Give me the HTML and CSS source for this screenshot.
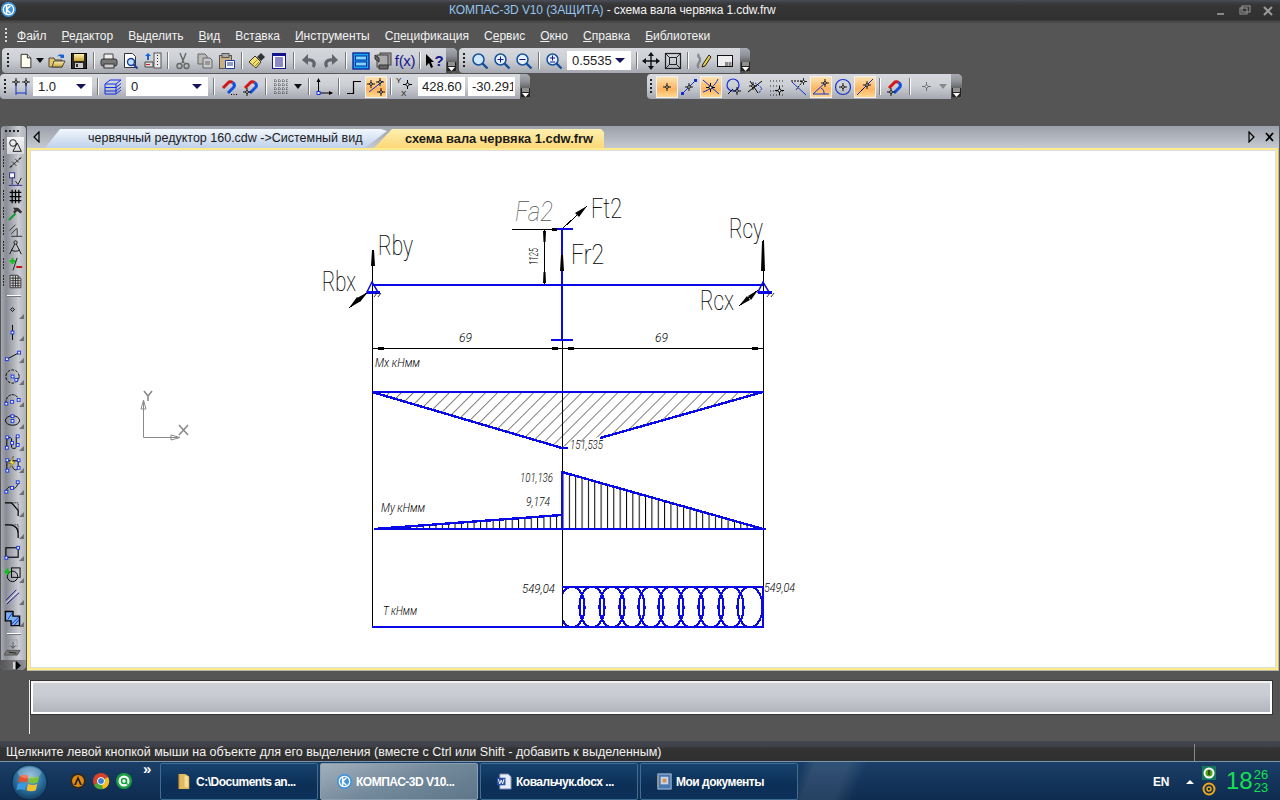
FILE: index.html
```html
<!DOCTYPE html>
<html lang="ru">
<head>
<meta charset="utf-8">
<title>КОМПАС-3D V10</title>
<link rel="stylesheet" href="styles.css">
</head>
<body>
<svg class="defs" width="0" height="0">
  <defs>
    <linearGradient id="gYellow" x1="0" y1="0" x2="0" y2="1"><stop offset="0" stop-color="#fff3b0"/><stop offset="1" stop-color="#c9a030"/></linearGradient>
    <radialGradient id="gOrb" cx=".5" cy=".35" r=".7"><stop offset="0" stop-color="#7fb6d8"/><stop offset=".55" stop-color="#2a6f9f"/><stop offset="1" stop-color="#0d2f52"/></radialGradient>
    <symbol id="mag" viewBox="0 0 18 18"><path d="M3 10L9 4A3.500 3.500 0 0 1 12.500 4.500" fill="none" stroke="#d01818" stroke-width="3"/><path d="M12.500 4.500A3.500 3.500 0 0 1 14 9L8 15" fill="none" stroke="#1450e0" stroke-width="3"/></symbol>
    <symbol id="cr" viewBox="0 0 9 9"><path d="M4.500 0v9M0 4.500h9" stroke="#000"/><circle cx="4.500" cy="4.500" r="1.500" fill="#fff" stroke="#000"/></symbol>
    <symbol id="corner" viewBox="0 0 5 5"><path d="M5 0v5H0z" fill="#6b6e74"/></symbol>
    <pattern id="hatchDiag" width="8.500" height="8.500" patternUnits="userSpaceOnUse" patternTransform="rotate(45)"><line x1="0" y1="0" x2="0" y2="8.500" stroke="#000" stroke-width="1"/></pattern>
    <pattern id="hatchVert" x="562.500" width="6.350" height="10" patternUnits="userSpaceOnUse"><line x1="0.500" y1="0" x2="0.500" y2="10" stroke="#000" stroke-width="1"/></pattern>
    <clipPath id="clipT"><rect x="563" y="587" width="200" height="40"/></clipPath>
  </defs>
</svg>

<header class="title">
  <svg class="logo" viewBox="0 0 18 18"><circle cx="9" cy="9" r="8" fill="#3f95dc"/><circle cx="9" cy="9" r="5.500" fill="none" stroke="#fff" stroke-width="1.400"/><path d="M7 4v10M7 9l4-4M7 9l4 4" stroke="#fff" stroke-width="1.600" fill="none"/></svg>
  <div class="title-text"><span class="t-blue">КОМПАС-3D V10 (ЗАЩИТА)</span> <span class="t-white">- схема вала червяка 1.cdw.frw</span></div>
  <div class="winbtns">
    <svg viewBox="0 0 16 12"><rect x="2" y="8" width="7" height="2" fill="#888"/></svg>
    <svg viewBox="0 0 16 12"><rect x="2" y="3" width="7" height="6" fill="none" stroke="#999"/><rect x="4" y="1" width="8" height="6" fill="none" stroke="#999"/></svg>
    <svg viewBox="0 0 16 12"><path d="M3 2l8 8M11 2l-8 8" stroke="#999" stroke-width="2.200"/></svg>
  </div>
</header>

<nav class="menu">
  <div class="grip"></div>
  <span><u>Ф</u>айл</span><span><u>Р</u>едактор</span><span>В<u>ы</u>делить</span><span><u>В</u>ид</span><span>Вст<u>а</u>вка</span><span><u>И</u>нструменты</span><span>С<u>п</u>ецификация</span><span>С<u>е</u>рвис</span><span><u>О</u>кно</span><span><u>С</u>правка</span><span><u>Б</u>иблиотеки</span>
</nav>

<div class="row row1">
  <div class="tb">
    <div class="grip g16"></div>
    <div class="ic w16"><svg viewBox="0 0 18 18"><path d="M3.500 1.500h7l4 4v11h-11z" fill="#fdfdf0" stroke="#222"/><path d="M10.500 1.500v4h4" fill="#ddd" stroke="#222"/></svg></div>
    <div class="ic w12"><i class="tri"></i></div>
    <div class="ic"><svg viewBox="0 0 18 18"><path d="M1 6h5l1 2h7v7H1z" fill="#e5c565" stroke="#444"/><path d="M4 15l2-6h11l-3 6z" fill="url(#gYellow)" stroke="#444"/><path d="M9 5a4 4 0 0 1 6-2l1-1v4h-4l1-1a3 3 0 0 0-4 0z" fill="#1860d8"/></svg></div>
    <div class="ic"><svg viewBox="0 0 18 18"><rect x="1.500" y="1.500" width="15" height="15" fill="#2a2a22" stroke="#000"/><rect x="4" y="2" width="10" height="7" fill="url(#gYellow)"/><rect x="5" y="11" width="8" height="5" fill="#ccc"/><rect x="6" y="12" width="2" height="3" fill="#333"/></svg></div>
    <div class="sep"></div>
    <div class="ic"><svg viewBox="0 0 18 18"><path d="M4 7V2h9v5" fill="#eee" stroke="#444"/><rect x="1" y="7" width="16" height="7" rx="2" fill="#777" stroke="#333"/><rect x="4" y="12" width="10" height="4" fill="#ccc" stroke="#333"/></svg></div>
    <div class="ic"><svg viewBox="0 0 18 18"><path d="M2.500 1.500h8l3 3v11h-11z" fill="#fff" stroke="#333"/><circle cx="9" cy="10" r="3.500" fill="#bfe0ff" stroke="#1a3c9c" stroke-width="1.400"/><path d="M11.500 12.500l4 4" stroke="#1a3c9c" stroke-width="2"/></svg></div>
    <div class="ic"><svg viewBox="0 0 18 18"><rect x="10" y="1" width="7" height="15" fill="#e8e8e8" stroke="#555"/><path d="M13.500 3v11" stroke="#222" stroke-dasharray="1 2"/><path d="M1 10h8v5H1z" fill="#ddd" stroke="#444"/><rect x="2" y="12" width="4" height="1" fill="#c22"/><path d="M3 8V4H1l3-3 3 3H5v4z" fill="#1860d8"/></svg></div>
    <div class="sep"></div>
    <div class="ic"><svg viewBox="0 0 18 18"><path d="M6 1l4 10M12 1L8 11" stroke="#666" stroke-width="1.400"/><circle cx="5.500" cy="14" r="2.500" fill="none" stroke="#666" stroke-width="1.400"/><circle cx="12.500" cy="14" r="2.500" fill="none" stroke="#666" stroke-width="1.400"/></svg></div>
    <div class="ic"><svg viewBox="0 0 18 18"><path d="M2 2h7l2 2v8H2z" fill="#b9b9b9" stroke="#666"/><path d="M7 6h7l2 2v8H7z" fill="#c9c9c9" stroke="#666"/><path d="M9 10h5M9 12h5" stroke="#666"/></svg></div>
    <div class="ic"><svg viewBox="0 0 18 18"><rect x="1.500" y="3.500" width="12" height="13" fill="#c8b080" stroke="#555"/><rect x="4" y="1.500" width="7" height="4" fill="#aaa" stroke="#555"/><path d="M7.500 8.500h9v8h-9z" fill="#fff" stroke="#1a3c9c"/><path d="M9 11h6M9 13h6" stroke="#1a3c9c"/></svg></div>
    <div class="sep"></div>
    <div class="ic"><svg viewBox="0 0 18 18"><path d="M1 10l6-6 6 6-5 6z" fill="#f3e070" stroke="#333"/><path d="M4 13l5-5M6 15l5-5" stroke="#9a8a30"/><path d="M9 5l4-4 4 4-4 4z" fill="#333"/></svg></div>
    <div class="ic"><svg viewBox="0 0 18 18"><rect x="2.500" y="1.500" width="13" height="15" fill="#fff" stroke="#14148c"/><rect x="3" y="2" width="12" height="2" fill="#14148c"/><path d="M5 6h8M5 8h8M5 10h8M5 12h8M5 14h8" stroke="#14148c"/></svg></div>
    <div class="sep"></div>
    <div class="ic"><svg viewBox="0 0 18 18"><path d="M13 15c3-4 0-8-6-7" fill="none" stroke="#62656b" stroke-width="3.200"/><path d="M8 2L2 8l6 5z" fill="#62656b"/></svg></div>
    <div class="ic"><svg viewBox="0 0 18 18"><path d="M5 15c-3-4 0-8 6-7" fill="none" stroke="#62656b" stroke-width="3.200"/><path d="M10 2l6 6-6 5z" fill="#62656b"/></svg></div>
    <div class="sep"></div>
    <div class="ic"><svg viewBox="0 0 18 18"><rect x="1" y="1" width="16" height="16" fill="#14a4ee" stroke="#082a9c" stroke-width="1.400"/><rect x="3.500" y="4" width="11" height="4" fill="#7cd6ff" stroke="#082a9c"/><rect x="3.500" y="10" width="11" height="4" fill="#7cd6ff" stroke="#082a9c"/></svg></div>
    <div class="ic"><svg viewBox="0 0 18 18"><rect x="6" y="1" width="11" height="12" fill="#999" stroke="#444"/><rect x="3" y="3" width="11" height="12" fill="#aaa" stroke="#444"/><path d="M1 3l4 3v4L1 7zM5 17h9v-4H5z" fill="#666" stroke="#333"/></svg></div>
    <div class="ic fx">f(x)</div>
    <div class="sep"></div>
    <div class="ic help"><svg viewBox="0 0 8 14"><path d="M0 0l8 8H5l2 5-2 1-2-5-3 3z" fill="#000"/></svg><b>?</b></div>
    <div class="end"><svg viewBox="0 0 9 9"><path d="M1 1h7M1 3h7" stroke="#fff"/><path d="M1 5h7L4.500 9z" fill="#fff"/></svg></div>
  </div>
  <div class="tb tb-zoom">
    <div class="grip g10"></div>
    <div class="ic"><svg viewBox="0 0 18 18"><circle cx="7.500" cy="7.500" r="5.500" fill="#cfe8ff" stroke="#14509c" stroke-width="1.500"/><path d="M11.500 11.500l5 5" stroke="#14509c" stroke-width="2.400"/></svg></div>
    <div class="ic"><svg viewBox="0 0 18 18"><circle cx="7.500" cy="7.500" r="5.500" fill="#e6f2ff" stroke="#14509c" stroke-width="1.500"/><path d="M11.500 11.500l5 5" stroke="#14509c" stroke-width="2.400"/><path d="M4.500 7.500h6M7.500 4.500v6" stroke="#14148c"/></svg></div>
    <div class="ic"><svg viewBox="0 0 18 18"><circle cx="7.500" cy="7.500" r="5.500" fill="#e6f2ff" stroke="#14509c" stroke-width="1.500"/><path d="M11.500 11.500l5 5" stroke="#14509c" stroke-width="2.400"/><path d="M4.500 7.500h6" stroke="#14148c"/></svg></div>
    <div class="sep"></div>
    <div class="ic"><svg viewBox="0 0 18 18"><circle cx="7.500" cy="7.500" r="5.500" fill="#e6f2ff" stroke="#14509c" stroke-width="1.500"/><path d="M11.500 11.500l5 5" stroke="#14509c" stroke-width="2.400"/><path d="M5 6h5M7.500 3.500v5M5 10h5" stroke="#14148c"/></svg></div>
    <div class="combo c64"><span>0.5535</span><i class="tri navy"></i></div>
    <div class="sep s7"></div>
    <div class="ic"><svg viewBox="0 0 18 18"><path d="M9 1v16M1 9h16" stroke="#111" stroke-width="1.400"/><path d="M9 0l3 4H6zM9 18l3-4H6zM0 9l4-3v6zM18 9l-4-3v6z" fill="#111"/></svg></div>
    <div class="ic"><svg viewBox="0 0 18 18"><rect x="1.500" y="1.500" width="15" height="15" fill="none" stroke="#222" stroke-width="1.200"/><rect x="5.500" y="5.500" width="7" height="7" fill="none" stroke="#222"/><path d="M2 2l3.500 3.500M16 2l-3.500 3.500M2 16l3.500-3.500M16 16l-3.500-3.500" stroke="#222"/></svg></div>
    <div class="sep"></div>
    <div class="ic"><svg viewBox="0 0 18 18"><path d="M5 16c-4-3 2-6 1-9s-3-2-1-5" fill="none" stroke="#888" stroke-width="2.400"/><path d="M9 12l6-9 2 2-6 9-3 1z" fill="#f0d040" stroke="#222"/></svg></div>
    <div class="ic"><svg viewBox="0 0 18 18"><rect x="1.500" y="3.500" width="15" height="11" fill="#eee" stroke="#111"/><rect x="9" y="10" width="3" height="4" fill="#888"/><rect x="12.500" y="10" width="3" height="4" fill="#888"/><path d="M1.500 14.500h15" stroke="#111"/></svg></div>
    <div class="end e-pad"><svg viewBox="0 0 9 9"><path d="M1 1h7M1 3h7" stroke="#fff"/><path d="M1 5h7L4.500 9z" fill="#fff"/></svg></div>
  </div>
</div>

<div class="row row2">
  <div class="tb tb-first">
    <div class="grip g10"></div>
    <div class="ic"><svg viewBox="0 0 18 18"><path d="M4 4v9M14 4v9M4 15h10" stroke="#1430d0"/><use href="#cr" x="0" y="0" width="8" height="8"/><use href="#cr" x="10" y="0" width="8" height="8"/><path d="M4 13v4M14 13v4" stroke="#1430d0"/></svg></div>
    <div class="combo c59"><span>1.0</span><i class="tri navy"></i></div>
    <div class="sep m2"></div>
    <div class="ic"><svg viewBox="0 0 18 18"><path d="M1 6h11l5-4H6zM1 9.500h11l5-4M1 13h11l5-4M1 16h11l5-4M1 6v10M12 6v10" fill="none" stroke="#1430e8"/></svg></div>
    <div class="combo c82"><span>0</span><i class="tri navy"></i></div>
    <div class="sep m2"></div>
    <div class="ic"><svg viewBox="0 0 18 18"><use href="#mag" width="18" height="18"/><path d="M11 16.500h1M13.500 16.500h1M16 16.500h1" stroke="#000"/></svg></div>
    <div class="ic"><svg viewBox="0 0 18 18"><use href="#mag" width="18" height="18"/><use href="#cr" x="1" y="10" width="8" height="8"/></svg></div>
    <div class="sep"></div>
    <div class="ic"><svg viewBox="0 0 18 18"><path d="M2 3h14M2 7h14M2 11h14M2 15h14M3 1v16M7 1v16M11 1v16M15 1v16" stroke="#555" stroke-dasharray="1 1"/></svg></div>
    <div class="ic w12"><i class="tri"></i></div>
    <div class="sep m1"></div>
    <div class="ic"><svg viewBox="0 0 18 18"><path d="M3.500 15V2M3.500 15H17" stroke="#000"/><path d="M3.500 0l2 4h-4zM18 15l-4-2v4z" fill="#000"/><rect x="2" y="13.500" width="3" height="3" fill="#fff" stroke="#1430e8"/></svg></div>
    <div class="sep"></div>
    <div class="ic"><svg viewBox="0 0 18 18"><path d="M2 15.500h6.500v-12H16" fill="none" stroke="#000" stroke-width="1.200"/></svg></div>
    <div class="ic on"><svg viewBox="0 0 18 18"><path d="M2 14L16 3" stroke="#1430d0"/><use href="#cr" x="9" y="0" width="8" height="8"/><use href="#cr" x="0" y="2" width="8" height="8"/><use href="#cr" x="10" y="10" width="8" height="8"/></svg></div>
    <div class="sep"></div>
    <div class="ic yx"><span>Y</span><svg viewBox="0 0 9 9"><use href="#cr" width="9" height="9"/></svg><span>X</span></div>
    <div class="inp"><span>428.60</span></div>
    <div class="inp"><span>-30.291</span></div>
    <div class="end e-pad5"><svg viewBox="0 0 9 9"><path d="M1 1h7M1 3h7" stroke="#fff"/><path d="M1 5h7L4.500 9z" fill="#fff"/></svg></div>
  </div>
  <div class="tb tb-snap">
    <div class="grip g9"></div>
    <div class="ic on"><svg viewBox="0 0 18 18"><use href="#cr" x="5" y="5" width="8" height="8"/></svg></div>
    <div class="ic"><svg viewBox="0 0 18 18"><path d="M2 16L16 2" stroke="#1430d0"/><rect x="1" y="14" width="3" height="3" fill="#1430d0"/><rect x="14" y="1" width="3" height="3" fill="#1430d0"/><use href="#cr" x="5" y="5" width="8" height="8"/></svg></div>
    <div class="ic on"><svg viewBox="0 0 18 18"><path d="M1 2L17 16M1 14C7 12 13 8 16 1" fill="none" stroke="#1430d0"/><use href="#cr" x="4" y="5" width="9" height="9"/></svg></div>
    <div class="ic"><svg viewBox="0 0 18 18"><circle cx="9" cy="7" r="6" fill="none" stroke="#1430d0" stroke-width="1.200"/><use href="#cr" x="9" y="9" width="8" height="8"/><path d="M4 16l5-5" stroke="#000"/></svg></div>
    <div class="ic"><svg viewBox="0 0 18 18"><path d="M4 3L12 15M2 14L16 3" stroke="#000"/><path d="M9 5l7 5-3 5" fill="none" stroke="#1430d0" stroke-dasharray="2 1"/><use href="#cr" x="3" y="4" width="8" height="8"/></svg></div>
    <div class="ic"><svg viewBox="0 0 18 18"><path d="M2 3h14M2 8h14M2 13h14M2 17h14" stroke="#222" stroke-dasharray="1 2"/><use href="#cr" x="7" y="8" width="9" height="9"/></svg></div>
    <div class="ic"><svg viewBox="0 0 18 18"><path d="M1 3h12" stroke="#000" stroke-dasharray="2 1"/><path d="M13 3L6 12" stroke="#000" stroke-dasharray="2 1"/><path d="M2 4l14 13" stroke="#1430d0"/><use href="#cr" x="10" y="0" width="7" height="7"/></svg></div>
    <div class="ic on"><svg viewBox="0 0 18 18"><path d="M1 16h16M1 16L14 4M9 10a6 6 0 0 1 3 6" fill="none" stroke="#1430d0"/><use href="#cr" x="9" y="1" width="8" height="8"/></svg></div>
    <div class="ic"><svg viewBox="0 0 18 18"><circle cx="9" cy="9" r="7.500" fill="none" stroke="#1430d0" stroke-width="1.200"/><use href="#cr" x="5" y="5" width="8" height="8"/></svg></div>
    <div class="ic on"><svg viewBox="0 0 18 18"><path d="M1 17L17 1" stroke="#1430d0"/><path d="M5 13l3-3" stroke="#000"/><use href="#cr" x="7" y="3" width="8" height="8"/></svg></div>
    <div class="sep"></div>
    <div class="ic"><svg viewBox="0 0 18 18"><use href="#mag" width="18" height="18"/><use href="#cr" x="1" y="10" width="8" height="8"/></svg></div>
    <div class="sep"></div>
    <div class="ic m1l dim"><svg viewBox="0 0 9 9"><use href="#cr" width="9" height="9"/></svg></div>
    <div class="ic w12"><i class="tri grey"></i></div>
    <div class="end e-pad2"><svg viewBox="0 0 9 9"><path d="M1 1h7M1 3h7" stroke="#fff"/><path d="M1 5h7L4.500 9z" fill="#fff"/></svg></div>
  </div>
</div>

<main class="work">
  <aside class="side">
    <div class="hgrip"></div>
    <div class="sgroup">
      <div class="si active"><svg viewBox="0 0 18 18"><circle cx="6" cy="6" r="4" fill="none" stroke="#000"/><path d="M11 6l5 10H6z" fill="none" stroke="#000"/></svg></div>
      <div class="si"><svg viewBox="0 0 18 18"><path d="M2 15L16 3M5 8l5 5M9 5l4 4" stroke="#222"/><path d="M2 15l3-1-1-1zM16 3l-3 1 1 1z" fill="#000"/></svg></div>
      <div class="si"><svg viewBox="0 0 18 18"><rect x="2" y="1" width="6" height="6" fill="#fff" stroke="#14148c"/><path d="M5 7v8M1 16h16" stroke="#14148c"/><path d="M9 11l3 4 4-8" fill="none" stroke="#000"/></svg></div>
      <div class="si"><svg viewBox="0 0 18 18"><path d="M2 4h14M2 9h14M2 14h14M5 1v16M9 1v16M13 1v16" stroke="#000" stroke-width="1.500"/></svg></div>
      <div class="si"><svg viewBox="0 0 18 18"><path d="M1 17L9 9" stroke="#0c9c30" stroke-width="2.400"/><path d="M6 2h6l5 5-2 2-4-3-3 3-2-2 2-2z" fill="#333"/></svg></div>
      <div class="si"><svg viewBox="0 0 18 18"><path d="M2 9l7-7M4 13l7-7M4 16h13M11 7v9" stroke="#222"/></svg></div>
      <div class="si"><svg viewBox="0 0 18 18"><circle cx="9" cy="3" r="2" fill="none" stroke="#000"/><path d="M8 5L2 17M10 5l6 12M4 12c3 2 7 2 10 0" fill="none" stroke="#000"/></svg></div>
      <div class="si"><svg viewBox="0 0 18 18"><path d="M2 5h7M5.500 1.500v7" stroke="#10c020" stroke-width="2.600"/><path d="M6 16l5-15" stroke="#000"/><path d="M10 12h7" stroke="#d01010" stroke-width="2.400"/></svg></div>
      <div class="si"><svg viewBox="0 0 18 18"><path d="M2.500 1.500h9l4 4v11h-13z" fill="#ddd" stroke="#222"/><path d="M3 5h12M3 8h12M3 11h12M3 14h12M6 2v14M9 2v14M12 2v14" stroke="#222"/></svg></div>
    </div>
    <div class="sdiv d10"></div>
    <div class="sgroup2">
      <div class="sj"><svg viewBox="0 0 18 18"><path d="M9 6l2 2-2 2-2-2z" fill="none" stroke="#000"/></svg><svg class="cn" viewBox="0 0 5 5"><use href="#corner"/></svg></div>
      <div class="sj"><svg viewBox="0 0 18 18"><path d="M9 1v16" stroke="#000"/><rect x="7.500" y="7.500" width="3" height="3" fill="#fff" stroke="#1430e8"/></svg><svg class="cn" viewBox="0 0 5 5"><use href="#corner"/></svg></div>
      <div class="sj"><svg viewBox="0 0 18 18"><path d="M3 14L16 7" stroke="#000"/><rect x="1.500" y="12.500" width="3" height="3" fill="#fff" stroke="#1430e8"/><rect x="14.500" y="5.500" width="3" height="3" fill="#fff" stroke="#1430e8"/></svg><svg class="cn" viewBox="0 0 5 5"><use href="#corner"/></svg></div>
      <div class="sj"><svg viewBox="0 0 18 18"><circle cx="9" cy="9" r="7" fill="none" stroke="#000" stroke-dasharray="3 1.500"/><rect x="7.500" y="7.500" width="3" height="3" fill="#fff" stroke="#1430e8"/><rect x="11.500" y="11" width="3" height="3" fill="#fff" stroke="#1430e8"/></svg><svg class="cn" viewBox="0 0 5 5"><use href="#corner"/></svg></div>
      <div class="sj"><svg viewBox="0 0 18 18"><path d="M2 14a7 8 0 0 1 14-2" fill="none" stroke="#000" stroke-dasharray="3 1"/><rect x="1" y="13" width="3" height="3" fill="#fff" stroke="#1430e8"/><rect x="7" y="11" width="3" height="3" fill="#fff" stroke="#1430e8"/><rect x="14" y="9" width="3" height="3" fill="#fff" stroke="#1430e8"/></svg><svg class="cn" viewBox="0 0 5 5"><use href="#corner"/></svg></div>
      <div class="sj"><svg viewBox="0 0 18 18"><ellipse cx="9" cy="9" rx="7.500" ry="5" fill="none" stroke="#000"/><rect x="7.500" y="3" width="3" height="3" fill="#fff" stroke="#1430e8"/><rect x="7.500" y="8" width="3" height="3" fill="#fff" stroke="#1430e8"/></svg><svg class="cn" viewBox="0 0 5 5"><use href="#corner"/></svg></div>
      <div class="sj"><svg viewBox="0 0 18 18"><path d="M3 15V5a3 3 0 0 1 5 0v9a3 3 0 0 0 5 0V3" fill="none" stroke="#000"/><rect x="2" y="2" width="3" height="3" fill="#fff" stroke="#1430e8"/><rect x="1.500" y="13" width="3" height="3" fill="#fff" stroke="#1430e8"/><rect x="7" y="8" width="3" height="3" fill="#fff" stroke="#1430e8"/><rect x="13" y="1" width="3" height="3" fill="#fff" stroke="#1430e8"/><rect x="13" y="10" width="3" height="3" fill="#fff" stroke="#1430e8"/></svg><svg class="cn" viewBox="0 0 5 5"><use href="#corner"/></svg></div>
      <div class="sj"><svg viewBox="0 0 18 18"><path d="M3 16V5h12v8c-2 3-5 2-6-2" fill="none" stroke="#000"/><path d="M10 0L5 8h3l-2 5 6-7H9z" fill="#f5e030" stroke="#333" stroke-width=".5"/><rect x="2" y="3" width="3" height="3" fill="#fff" stroke="#1430e8"/><rect x="2" y="14" width="3" height="3" fill="#fff" stroke="#1430e8"/><rect x="14" y="3" width="3" height="3" fill="#fff" stroke="#1430e8"/><rect x="14" y="11" width="3" height="3" fill="#fff" stroke="#1430e8"/></svg><svg class="cn" viewBox="0 0 5 5"><use href="#corner"/></svg></div>
      <div class="sj"><svg viewBox="0 0 18 18"><path d="M2 14c2-5 4-5 6-4s4 3 8-6" fill="none" stroke="#000"/><rect x="1" y="13" width="3" height="3" fill="#fff" stroke="#1430e8"/><rect x="7" y="9" width="3" height="3" fill="#fff" stroke="#1430e8"/><rect x="13" y="3" width="3" height="3" fill="#fff" stroke="#1430e8"/></svg><svg class="cn" viewBox="0 0 5 5"><use href="#corner"/></svg></div>
      <div class="sj"><svg viewBox="0 0 18 18"><path d="M1 3h7l7 8v6" fill="none" stroke="#000" stroke-width="1.300"/><path d="M8 3h7v8" fill="none" stroke="#000" stroke-dasharray="1 1"/></svg><svg class="cn" viewBox="0 0 5 5"><use href="#corner"/></svg></div>
      <div class="sj"><svg viewBox="0 0 18 18"><path d="M1 3h6c5 1 8 4 8 9v5" fill="none" stroke="#000" stroke-width="1.300"/><path d="M8 3h7v8" fill="none" stroke="#000" stroke-dasharray="1 1"/></svg><svg class="cn" viewBox="0 0 5 5"><use href="#corner"/></svg></div>
      <div class="sj"><svg viewBox="0 0 18 18"><rect x="2" y="4" width="13" height="10" fill="none" stroke="#000" stroke-width="1.200"/><rect x="1" y="13" width="3" height="3" fill="#fff" stroke="#1430e8"/><rect x="13.500" y="2.500" width="3" height="3" fill="#fff" stroke="#1430e8"/></svg><svg class="cn" viewBox="0 0 5 5"><use href="#corner"/></svg></div>
      <div class="sj"><svg viewBox="0 0 18 18"><rect x="8" y="2" width="9" height="10" fill="none" stroke="#000"/><circle cx="9" cy="11" r="5.500" fill="none" stroke="#000"/><path d="M1 6h6M4 3v0L1 6l3 3z" fill="#10c020" stroke="#10c020" stroke-width="1.400"/></svg><svg class="cn" viewBox="0 0 5 5"><use href="#corner"/></svg></div>
      <div class="sj"><svg viewBox="0 0 18 18"><path d="M2 13L13 2M3 17L16 5" stroke="#14148c"/><path d="M2 16L15 3" stroke="#fff" stroke-width=".6"/></svg><svg class="cn" viewBox="0 0 5 5"><use href="#corner"/></svg></div>
      <div class="sj"><svg viewBox="0 0 18 18"><path d="M1.500 1.500h8v5h7v10h-9v-5h-6z" fill="#7ab0f0" stroke="#000" stroke-width="1.500"/><path d="M4 10l5-7M8 15l8-8M11 16l5-6" stroke="#1430d0"/></svg><svg class="cn" viewBox="0 0 5 5"><use href="#corner"/></svg></div>
    </div>
    <div class="sdiv d6"></div>
    <div class="sj last"><svg viewBox="0 0 18 18"><path d="M5 1h9v7H5z" fill="none" stroke="#888" stroke-dasharray="1 1"/><path d="M9.500 3v6M7 7l2.500 3L12 7" fill="none" stroke="#555"/><path d="M3 12h14l-3 5H0z" fill="#777" stroke="#555"/><path d="M5 14l8 1" stroke="#222"/></svg></div>
    <div class="side-end"><svg viewBox="0 0 9 9"><path d="M1 1v7" stroke="#fff" stroke-width="1.400"/><path d="M3 0l5 4.500L3 9z" fill="#000"/></svg></div>
  </aside>
  <section class="doc">
    <div class="tabs">
      <div class="tabbtn"><svg viewBox="0 0 9 12"><path d="M7 1L2 6l5 5z" fill="none" stroke="#000" stroke-width="1.200"/></svg></div>
      <div class="tab tab-a">червячный редуктор 160.cdw -&gt;Системный вид</div>
      <div class="tab tab-b">схема вала червяка 1.cdw.frw</div>
      <div class="tabctl">
        <svg viewBox="0 0 9 12"><path d="M2 1l5 5-5 5z" fill="none" stroke="#000" stroke-width="1.200"/></svg>
        <svg viewBox="0 0 9 12"><path d="M1 2l7 8M8 2l-7 8" stroke="#000" stroke-width="1.800"/></svg>
      </div>
    </div>
    <div class="canvas">
      <svg class="drawing" viewBox="30 150 1246 518" width="1246" height="518">
        <g class="axes">
          <path d="M143.500 402V437.500H178"/>
          <path d="M143.500 400l-2.500 9h5zM180 437.500l-9-2.500v5z"/>
          <path class="thick" d="M144 391l4 5 4-5M148 396v5M179 425l9 10M188 425l-9 10"/>
        </g>

        <!-- witness and dimension lines -->
        <g class="bk">
          <path d="M372.500 250V627M562.500 340V627M763.500 240V627"/>
          <path d="M372 348.500H764"/>
          <path d="M512 229.500H556M544.500 229V285M542 285.500H553"/>
          <path d="M563 228L587 206M349 308L368 292M739 306L758 290"/>
        </g>

        <!-- shaft -->
        <g class="bl">
          <path d="M372 285H763M562 229V340M555 229H573M551 340H573"/>
          <path class="t1" d="M372 282l-5 10h11zM763 282l-5 10h11z"/>
          <path d="M367 292.500h13M758 292.500h14"/>
        </g>
        <path class="bkth" d="M374 297l3-4M378 297l3-4M767 297l3-4M771 297l3-4"/>

        <g class="hd">
          <path d="M378 347h6v3h-6zM552 347h6v3h-6zM568 347h6v3h-6zM752 347h6v3h-6zM552 228h5v3h-5z"/>
          <path d="M543 231h3l-.5 11h-2zM543 283h3l-.5-11h-2zM371 266h4l-1-16h-2zM761 271h4l-1-30h-2zM560 271h4l-1-16h-2z"/>
          <path d="M587 206l-12 7 4 4zM349 308l12-7-4-4zM368 292l-11 6 3 4zM739 306l11-6-3-4zM758 290l-10 6 3 4z"/>
        </g>

        <!-- Mx -->
        <polygon class="fd" points="373,393 562,447 610,434 763,393"/>
        <path class="blp" d="M372 392H764M372 392L562 448H568M600 438L763 392"/>

        <!-- My -->
        <polygon class="fv" points="374,529 562,515 562,472 763,529"/>
        <path class="blp" d="M374 529H766M374 529L562 515M562 529V472L763 529"/>

        <!-- T -->
        <g class="clipT">
          <g class="circ">
            <ellipse cx="572" cy="607" rx="12.500" ry="20.500"/><ellipse cx="592" cy="607" rx="12.500" ry="20.500"/><ellipse cx="612" cy="607" rx="12.500" ry="20.500"/><ellipse cx="632" cy="607" rx="12.500" ry="20.500"/><ellipse cx="651" cy="607" rx="12.500" ry="20.500"/><ellipse cx="671" cy="607" rx="12.500" ry="20.500"/><ellipse cx="691" cy="607" rx="12.500" ry="20.500"/><ellipse cx="711" cy="607" rx="12.500" ry="20.500"/><ellipse cx="731" cy="607" rx="12.500" ry="20.500"/><ellipse cx="750" cy="607" rx="12.500" ry="20.500"/>
          </g>
        </g>
        <path class="blp" d="M562 587H764M372 627H764M763 587V627"/>

        <!-- labels -->
        <text class="big" x="378" y="255" textLength="35" lengthAdjust="spacingAndGlyphs">Rby</text>
        <text class="big" x="322" y="291" textLength="34" lengthAdjust="spacingAndGlyphs">Rbx</text>
        <text class="big" x="729" y="238" textLength="34" lengthAdjust="spacingAndGlyphs">Rcy</text>
        <text class="big" x="700" y="310" textLength="34" lengthAdjust="spacingAndGlyphs">Rcx</text>
        <text class="big" x="591" y="218" textLength="31" lengthAdjust="spacingAndGlyphs">Ft2</text>
        <text class="big" x="571" y="264" textLength="33" lengthAdjust="spacingAndGlyphs">Fr2</text>
        <text class="big ital grey" x="515" y="221" textLength="38" lengthAdjust="spacingAndGlyphs">Fa2</text>
        <text class="sm" x="459" y="342" textLength="13" lengthAdjust="spacingAndGlyphs">69</text>
        <text class="sm" x="655" y="342" textLength="13" lengthAdjust="spacingAndGlyphs">69</text>
        <text class="sm rot" x="0" y="0" transform="translate(538 265) rotate(-90)" textLength="17" lengthAdjust="spacingAndGlyphs">1125</text>
        <text class="sm" x="375" y="367" textLength="45" lengthAdjust="spacingAndGlyphs">Mx кНмм</text>
        <text class="sm" x="570" y="449" textLength="33" lengthAdjust="spacingAndGlyphs">151,535</text>
        <text class="sm" x="520" y="482" textLength="33" lengthAdjust="spacingAndGlyphs">101,136</text>
        <text class="sm" x="526" y="506" textLength="24" lengthAdjust="spacingAndGlyphs">9,174</text>
        <text class="sm" x="381" y="512" textLength="44" lengthAdjust="spacingAndGlyphs">My кНмм</text>
        <text class="sm" x="522" y="593" textLength="33" lengthAdjust="spacingAndGlyphs">549,04</text>
        <text class="sm" x="764" y="592" textLength="31" lengthAdjust="spacingAndGlyphs">549,04</text>
        <text class="sm" x="383" y="615" textLength="34" lengthAdjust="spacingAndGlyphs">T кНмм</text>
      </svg>
    </div>
  </section>
</main>

<section class="panel-wrap">
  <div class="panel"></div>
</section>

<div class="status">
  <span>Щелкните левой кнопкой мыши на объекте для его выделения (вместе с Ctrl или Shift - добавить к выделенным)</span>
  <i class="status-sep"></i>
</div>

<footer class="taskbar">
  <svg class="orb" viewBox="0 0 38 38">
    <circle cx="19" cy="19" r="18" fill="url(#gOrb)" stroke="#0a2540"/>
    <path d="M9 12q4-2 9 0l-1.500 7q-5-2-9 0z" fill="#e8502a"/>
    <path d="M19.500 12.500q5 2 9.500 0L27.500 19q-5 2-9.500 0z" fill="#7cc23a"/>
    <path d="M7 20.500q4-2 9 0L14.500 27q-4.500-2-9 0z" fill="#3a9ae0"/>
    <path d="M17.500 20.500q5 2 9.500 0L25.500 27q-5 2-9.500 0z" fill="#f5c030"/>
    <ellipse cx="19" cy="9" rx="12" ry="6" fill="#fff" opacity=".25"/>
  </svg>
  <div class="quick">
    <svg viewBox="0 0 18 18"><circle cx="9" cy="9" r="8" fill="#2a2a2a"/><circle cx="9" cy="9" r="6" fill="#e08a10"/><path d="M9 4l4 9h-2l-2-5-2 5H5z" fill="#222"/></svg>
    <svg viewBox="0 0 18 18"><circle cx="9" cy="9" r="8" fill="#d8402a"/><path d="M9 9L2 13a8 8 0 0 0 9 4z" fill="#4ca838"/><path d="M9 9l2 8a8 8 0 0 0 5-12z" fill="#f0c020"/><circle cx="9" cy="9" r="3.500" fill="#3a80d8" stroke="#fff"/></svg>
    <svg viewBox="0 0 18 18"><circle cx="9" cy="9" r="8" fill="#18a040"/><circle cx="9" cy="9" r="5.500" fill="#fff"/><circle cx="9" cy="9" r="2.500" fill="none" stroke="#18a040" stroke-width="1.500"/><path d="M11.500 7v4q0 1.500 1.500 1" fill="none" stroke="#18a040" stroke-width="1.300"/></svg>
  </div>
  <span class="more">»</span>
  <div class="tbtn"><svg viewBox="0 0 18 18"><path d="M3 1h7l4 3v13H3z" fill="#e0b860"/><path d="M9 3h4v12H9z" fill="#f5dc90"/><path d="M3 1v16" stroke="#a88030"/></svg><span>C:\Documents an...</span></div>
  <div class="tbtn act"><svg viewBox="0 0 18 18"><circle cx="9" cy="9" r="8" fill="#3f95dc"/><circle cx="9" cy="9" r="5.500" fill="none" stroke="#fff" stroke-width="1.400"/><path d="M7 4v10M7 9l4-4M7 9l4 4" stroke="#fff" stroke-width="1.600" fill="none"/></svg><span>КОМПАС-3D V10...</span></div>
  <div class="tbtn"><svg viewBox="0 0 18 18"><path d="M4 1h9l3 3v13H4z" fill="#e8eef8" stroke="#6a7ea8"/><rect x="1" y="5" width="9" height="8" fill="#2a50a8"/><path d="M2.500 6.500l1.500 5 1.500-4 1.500 4 1.500-5" fill="none" stroke="#fff"/></svg><span>Ковальчук.docx ...</span></div>
  <div class="tbtn"><svg viewBox="0 0 18 18"><rect x="2" y="1" width="14" height="16" fill="#4a78b0" stroke="#b0c8e0"/><rect x="5" y="4" width="8" height="8" fill="#c8d8e8"/><rect x="7" y="6" width="4" height="4" fill="#d89050"/><path d="M2 3v12" stroke="#e0a040" stroke-width="1.400" stroke-dasharray="1 1"/></svg><span>Мои документы</span></div>
  <div class="tray">
    <span class="lang">EN</span>
    <i class="tray-up"></i>
    <div class="tray-ic">
      <svg viewBox="0 0 14 14"><rect width="14" height="14" fill="#14785a"/><circle cx="7" cy="7" r="5.500" fill="#fff"/><circle cx="7" cy="7" r="3.500" fill="#50a010"/><rect x="6.400" y="4" width="1.200" height="5" fill="#123"/></svg>
      <svg viewBox="0 0 14 14"><circle cx="7" cy="7" r="5.500" fill="none" stroke="#f0a818" stroke-width="2"/><circle cx="7" cy="7" r="2" fill="none" stroke="#f0a818" stroke-width="1.500"/></svg>
    </div>
    <div class="clock"><b>18</b><div class="clock-s"><span>26</span><span>23</span></div></div>
  </div>
</footer>
</body>
</html>
```
FILE: styles.css
```css
* { box-sizing: border-box; }
html, body { margin: 0; padding: 0; }
body {
  width: 1280px; height: 800px; overflow: hidden;
  background: #555; color: #111;
  font: 12px "Liberation Sans", "DejaVu Sans", sans-serif;
  display: flex; flex-direction: column;
}
.defs { position: absolute; }

/* title */
.title {
  height: 23px; flex: none; position: relative;
  display: flex; align-items: center; justify-content: center;
  background: linear-gradient(#4b4e58 0, #3a3b3f 3px, #353535 6px, #303030 20px, #474747 21px, #4a4a4a 23px);
}
.logo { position: absolute; left: 0; top: 1px; width: 17px; height: 17px; }
.title-text { position: absolute; left: 449px; top: 2px; font: 12px/16px "Liberation Sans", sans-serif; white-space: nowrap; letter-spacing: -.1px; }
.t-blue { color: #96c4ee; }
.t-white { color: #f2f2f2; }
.winbtns { position: absolute; right: 0; top: 5px; display: flex; gap: 7px; padding-right: 3px; }
.winbtns svg { width: 16px; height: 12px; }

/* menu */
.menu { height: 25px; flex: none; display: flex; align-items: center; color: #f2f2f2; padding-left: 5px; }
.menu span { margin-left: 15px; font-size: 12px; line-height: 16px; white-space: nowrap; }
.menu .grip { width: 2px; }
.menu .grip + span { margin-left: 10px; }

.grip {
  height: 15px; position: relative; flex: none;
  background: linear-gradient(90deg, transparent calc(50% - 1px), #222 calc(50% - 1px), #222 calc(50% + 1px), transparent calc(50% + 1px));
  -webkit-mask: repeating-linear-gradient(#000 0 2px, transparent 2px 4px);
  mask: repeating-linear-gradient(#000 0 2px, transparent 2px 4px);
}
.menu .grip { background: #ddd; }
.g16 { width: 12px; margin-right: 4px; }
.g10 { width: 10px; }
.g9 { width: 9px; }

/* toolbars */
.row { display: flex; flex: none; height: 25px; margin-bottom: 1px; }
.row1 { padding-left: 2px; }
.tb {
  display: flex; align-items: center; height: 25px;
  background: linear-gradient(#d6d8dd 0, #cdd0d5 45%, #a5a8b0 100%);
  border-radius: 4px 5px 5px 4px; position: relative;
}
.tb-zoom { margin-left: 2px; }
.tb-snap { margin-left: 117px; }
.ic { width: 22px; height: 22px; flex: none; display: flex; align-items: center; justify-content: center; }
.ic svg { width: 18px; height: 18px; display: block; }
.w16 { width: 16px; }
.w12 { width: 12px; }
.m1l { margin-left: 1px; }
.dim { opacity: .45; }
.dim svg { width: 9px; height: 9px; }
.on { background: linear-gradient(#fde7b8, #fdb45f 60%, #fddc96); box-shadow: 0 0 0 1px #eef0f2 inset; }
.tri { display: block; width: 0; height: 0; border: 4px solid transparent; border-top: 5px solid #111; border-bottom: 0; }
.tri.navy { border-width: 5px 5px 0; border-color: #14145c transparent transparent; }
.tri.grey { border-top-color: #8a8a8a; }
.sep { width: 8px; height: 17px; flex: none; position: relative; }
.sep::after { content: ""; position: absolute; left: 3px; top: 0; bottom: 0; width: 2px; background: linear-gradient(90deg, #777 50%, #fff 50%); }
.s7 { width: 7px; margin-left: 2px; }
.m2 { margin-left: 2px; }
.m1 { margin-left: 1px; }
.fx { color: #14148c; font: 15px/22px "Liberation Sans", sans-serif; letter-spacing: -.3px; }
.help svg { width: 8px; height: 14px; }
.help b { font: bold 15px/18px "Liberation Sans", sans-serif; color: #14148c; }
.end {
  width: 11px; height: 25px; flex: none; align-self: flex-start;
  background: linear-gradient(#a7aab1 0, #8f9299 30%, #555 65%, #4c4c4c 100%);
  border-radius: 0 5px 5px 0; display: flex; align-items: flex-end; justify-content: center; padding-bottom: 2px;
}
.end svg { width: 9px; height: 9px; background: #222; }
.e-pad { margin-left: 4px; width: 10px; }
.e-pad5 { margin-left: 5px; width: 10px; }
.e-pad2 { margin-left: 2px; }
.combo {
  height: 19px; flex: none; background: #fff; display: flex; align-items: center; justify-content: space-between;
  padding: 0 6px 0 5px; margin-left: 2px; font: 13px/19px "Liberation Sans", sans-serif; color: #222;
}
.combo span { overflow: hidden; white-space: nowrap; }
.c64 { width: 64px; }
.c59 { width: 59px; margin-left: 1px; }
.c82 { width: 82px; }
.inp { width: 47px; height: 19px; flex: none; background: #fff; margin-left: 3px; padding-left: 4px; font: 13px/19px "Liberation Sans", sans-serif; color: #222; white-space: nowrap; }
.inp span { display: block; width: 41px; overflow: hidden; }
.yx { width: 20px; position: relative; display: block; font: 8px/8px "Liberation Sans", sans-serif; color: #111; }
.yx span { position: absolute; left: 1px; top: 1px; }
.yx span:last-child { left: 6px; top: 14px; }
.yx svg { position: absolute; left: 8px; top: 4px; width: 9px; height: 9px; }

/* workspace */
.work { margin-top: 26px; height: 546px; flex: none; display: flex; }
.side {
  width: 25px; margin-left: 1px; height: 544px; flex: none;
  background: linear-gradient(90deg, #a8abb2, #898c94 20%, #c9ccd2 70%, #b0b3ba);
  border-radius: 4px 4px 5px 5px;
  display: flex; flex-direction: column;
}
.hgrip { height: 9px; flex: none; margin: 2px 4px 0; background: repeating-linear-gradient(90deg, #222 0 2px, transparent 2px 4px) no-repeat 0 2px / 15px 2px; }
.sgroup { display: flex; flex-direction: column; height: 153px; flex: none; }
.si { height: 17px; flex: none; display: flex; justify-content: flex-end; align-items: center; padding-right: 2px; position: relative; }
.si::before { content: ""; position: absolute; left: 2px; top: 2px; bottom: 3px; width: 1px; background: repeating-linear-gradient(#222 0 2px, transparent 2px 3px); }
.si svg { width: 15px; height: 15px; margin-right: 1px; }
.active { background: linear-gradient(#f4f5f6, #d4d6da); margin: 0 2px 0 6px; padding-right: 0; justify-content: center; }
.active::before { left: -4px; }
.sdiv { flex: none; position: relative; }
.sdiv::after { content: ""; position: absolute; left: 6px; width: 14px; height: 1px; top: 50%; background: #fff; box-shadow: 0 1px #777; }
.d10 { height: 9px; }
.d6 { height: 7px; }
.sgroup2 { display: flex; flex-direction: column; flex: none; }
.sj { height: 22px; flex: none; position: relative; display: flex; align-items: center; justify-content: center; padding-right: 3px; }
.sj svg { width: 17px; height: 17px; display: block; }
.sj svg.cn { position: absolute; right: 2px; bottom: 2px; width: 5px; height: 5px; }
.side-end { flex: 1; background: linear-gradient(90deg, #555, #90939a); border-radius: 0 0 5px 5px; margin-top: 2px; display: flex; justify-content: flex-end; align-items: center; padding-right: 4px; }
.side-end svg { width: 9px; height: 9px; }

.doc { width: 1252px; flex: none; margin-left: 1px; display: flex; flex-direction: column; height: 545px; }
.tabs { height: 22px; flex: none; position: relative; background: linear-gradient(#9aa0aa, #c6c9d0); display: flex; }
.tabbtn { width: 18px; display: flex; align-items: center; justify-content: center; }
.tabbtn svg, .tabctl svg { width: 9px; height: 12px; }
.tab { position: absolute; top: 3px; height: 19px; font-size: 12.5px; line-height: 19px; white-space: nowrap; color: #1a1a1a; }
.tab-a { left: 18px; width: 342px; padding-left: 43px; background: linear-gradient(#f2f8fd, #bfd0ea); clip-path: polygon(15px 0, 336px 0, 342px 2px, 320px 100%, 0 100%); }
.tab-b { left: 347px; width: 230px; padding-left: 31px; background: linear-gradient(#fdf0b0, #fdd877); font-weight: bold; font-size: 12.9px; clip-path: polygon(18px 0, 227px 0, 230px 3px, 230px 100%, 0 100%); }
.tabctl { position: absolute; right: 5px; top: 5px; display: flex; gap: 9px; }
.canvas { flex: 1; border: 1px solid #b8b8a0; border-width: 0 1px 1px 0; background: #fdeb8e; padding: 2px 1px 2px 3px; }
.drawing { display: block; background: #fff; box-shadow: 0 0 0 1px #ddd inset; }

/* drawing */
.axes path { fill: none; stroke: #8a8a8a; stroke-width: 1; }
.axes .thick { stroke-width: 1.600; }
.bk path { fill: none; stroke: #000; stroke-width: 1; shape-rendering: crispEdges; }
.hd path { fill: #000; }
.bl path { fill: none; stroke: #0a0ae6; stroke-width: 2.400; shape-rendering: crispEdges; }
.bl .t1 { fill: none; stroke-width: 1.500; shape-rendering: auto; }
.bkth { fill: none; stroke: #000; stroke-width: .8; }
.blp { fill: none; stroke: #0a0ae6; stroke-width: 2.400; shape-rendering: crispEdges; }
.fd { fill: url(#hatchDiag); shape-rendering: crispEdges; }
.fv { fill: url(#hatchVert); shape-rendering: crispEdges; }
.clipT { clip-path: url(#clipT); }
.circ ellipse { fill: none; stroke: #0a0ae6; stroke-width: 2.200; shape-rendering: crispEdges; }
.big { font: 100 27px "Roboto", "Liberation Sans", sans-serif; fill: #000; stroke: #000; stroke-width: .2; }
.ital { font-style: italic; }
.grey { fill: #555; stroke: none; }
.sm { font: italic 300 13px "Roboto", "Liberation Sans", "DejaVu Sans", sans-serif; fill: #000; }
.rot { font-size: 13px; }

/* bottom */
.panel-wrap { margin-top: 8px; margin-left: 29px; height: 54px; flex: none; border-left: 1px solid #eee; }
.panel { width: 1243px; height: 35px; background: linear-gradient(#cdd0d5 0, #c9ccd2 40%, #b2b5bc 100%); border: 3px solid #fff; border-color: #f2f2f2 #fff #fff #fff; outline: 1px solid #333; outline-offset: -1px; }
.status { margin-top: 7px; height: 20px; flex: none; background: linear-gradient(#444650 0, #3e3f46 6px, #333 7px, #2f2f2f 100%); color: #f2f2f2; padding-left: 6px; font-size: 12.5px; line-height: 23px; position: relative; white-space: nowrap; }
.status-sep { position: absolute; left: 1194px; top: 3px; bottom: 0; width: 1px; background: #888; }

/* taskbar */
.taskbar {
  height: 40px; flex: none; display: flex; position: relative; padding-left: 160px; padding-top: 1px;
  border-top: 1px solid #7a97b0;
  background:
    linear-gradient(112deg, transparent 62%, rgba(255,255,255,.1) 63%, rgba(255,255,255,.1) 65.500%, transparent 67%),
    linear-gradient(#1b3f68, #123258 60%, #0e2c4e);
  gap: 2px;
}
.orb { position: absolute; left: 11px; top: 2px; width: 37px; height: 37px; }
.quick { position: absolute; left: 69px; top: 10px; display: flex; gap: 5px; }
.quick svg { width: 18px; height: 18px; }
.more { position: absolute; left: 143px; top: -1px; color: #fff; font: bold 15px/16px "Liberation Sans", sans-serif; }
.tbtn {
  width: 158px; height: 37px; flex: none; display: flex; align-items: center; gap: 3px; padding-left: 15px;
  border: 1px solid #3f6d93; border-radius: 2px;
  background: linear-gradient(#17426e, #0c2f57 60%, #0c3059);
  color: #fff; font: bold 12px/16px "Liberation Sans", sans-serif; white-space: nowrap; letter-spacing: -.5px;
}
.tbtn svg { width: 17px; height: 17px; flex: none; }
.tbtn.act { background: linear-gradient(160deg, #a3b0bb, #73899c 50%, #5e7689); border-color: #8aa0b0; }
.tray { position: absolute; left: 1152px; top: 0; width: 128px; height: 38px; color: #fff; }
.lang { position: absolute; left: 1px; top: 13px; font: bold 12px/14px "Liberation Sans", sans-serif; letter-spacing: -.3px; }
.tray-up { position: absolute; left: 34px; top: 18px; width: 0; height: 0; border: 4px solid transparent; border-bottom: 4px solid #fff; border-top: 0; }
.tray-ic { position: absolute; left: 50px; top: 4px; display: flex; flex-direction: column; gap: 2px; }
.tray-ic svg { width: 14px; height: 14px; display: block; }
.clock { position: absolute; left: 74px; top: 6px; display: flex; color: #14e050; }
.clock b { font: 400 24px/26px "Liberation Sans", sans-serif; }
.clock-s { display: flex; flex-direction: column; margin-left: 1px; font: 13px/13px "Liberation Sans", sans-serif; }
```
